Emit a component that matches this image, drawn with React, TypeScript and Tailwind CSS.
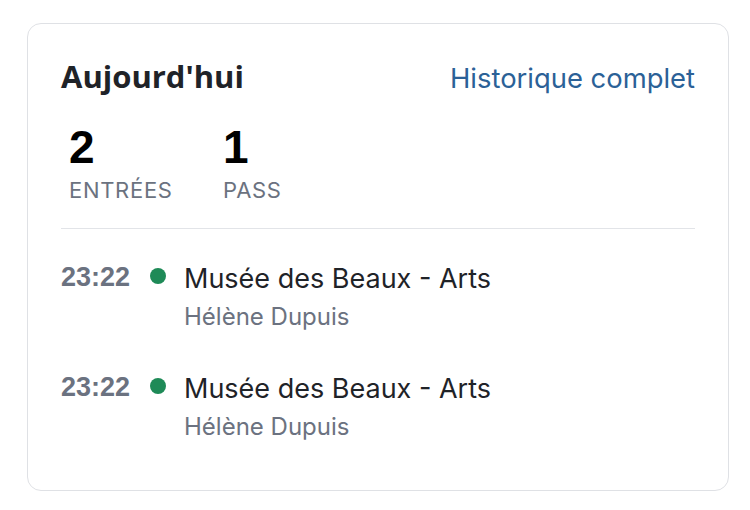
const rows = [
  { time: '23:22', place: 'Musée des Beaux - Arts', person: 'Hélène Dupuis' },
  { time: '23:22', place: 'Musée des Beaux - Arts', person: 'Hélène Dupuis' },
];

export default function App() {
  return (
    <div className="min-h-[510px] bg-white pl-[27px] pt-[23px] font-['Inter',sans-serif]">
      <div className="w-[702px] rounded-[14px] border border-[#dfe1e5] bg-white pl-[33px] pr-[33px] pt-[34px] pb-[48px]">
        <div className="flex items-baseline justify-between">
          <h2 className="font-['Open_Sans',sans-serif] text-[31px] font-bold leading-[36px] text-[#1f2328]">
            Aujourd'hui
          </h2>
          <a className="text-[27.4px] leading-[36px] text-[#2b6197]">Historique complet</a>
        </div>

        <div className="mt-[28px] flex pl-[8px]">
          <div className="flex w-[154px] flex-col">
            <span className="font-['Liberation_Sans',sans-serif] text-[46px] font-bold leading-[46px] text-black">2</span>
            <span className="mt-[7px] text-[22px] leading-[26px] tracking-[0.7px] text-[#6b7280]">ENTRÉES</span>
          </div>
          <div className="flex flex-col">
            <span className="font-['Liberation_Sans',sans-serif] text-[46px] font-bold leading-[46px] text-black">1</span>
            <span className="mt-[7px] text-[22px] leading-[26px] tracking-[0.7px] text-[#6b7280]">PASS</span>
          </div>
        </div>

        <div className="mt-[25px] h-px bg-[#e2e4e8]" />

        <ul className="mt-[33px] flex flex-col gap-[40px]">
          {rows.map((r, i) => (
            <li key={i} className="flex items-start">
              <span className="w-[89px] font-['Liberation_Sans',sans-serif] text-[27px] font-bold leading-[30px] text-[#6b7280]">
                {r.time}
              </span>
              <span className="mt-[6px] h-[16px] w-[16px] shrink-0 rounded-full bg-[#1e8a57]" />
              <div className="ml-[18px] flex flex-col">
                <span className="text-[27px] leading-[34px] text-[#1f2328]">{r.place}</span>
                <span className="mt-[6px] text-[24px] leading-[30px] text-[#6b7280]">{r.person}</span>
              </div>
            </li>
          ))}
        </ul>
      </div>
    </div>
  );
}
